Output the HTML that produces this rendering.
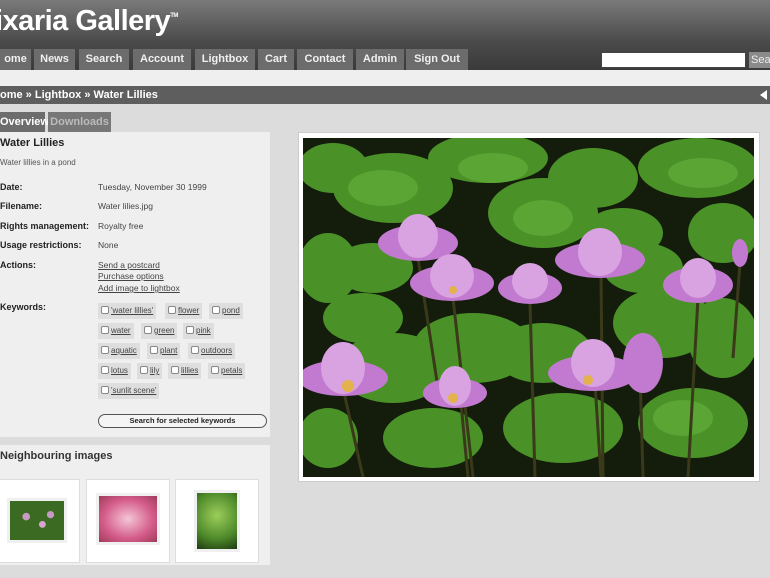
<!DOCTYPE html>
<html><head><meta charset="utf-8"><style>
*{margin:0;padding:0;box-sizing:border-box}
body{width:770px;height:578px;overflow:hidden;background:#dcdcdc;font-family:"Liberation Sans",sans-serif;position:relative}
.hdr{position:absolute;left:0;top:0;width:770px;height:70px;background:linear-gradient(#7a7a7a,#4a4a4a 60%,#3a3a3a)}
.logo{position:absolute;left:-5px;top:5px;font-size:29px;font-weight:bold;color:#fff;letter-spacing:-0.5px}
.logo sup{font-size:6px;vertical-align:top;position:relative;top:8px}
.tab{position:absolute;top:49px;height:21px;background:#6c6c6c;color:#f0f0f0;font-size:11px;font-weight:bold;text-align:center;line-height:21px}
.sep{position:absolute;top:70px;left:0;width:770px;height:16px;background:#efefef}
.bc{position:absolute;top:86px;left:0;width:770px;height:18px;background:#5e5e5e;color:#fff;font-size:11px;font-weight:bold;line-height:18px}
.st{position:absolute;top:112px;height:20px;background:#6c6c6c;font-size:11px;font-weight:bold;line-height:20px;text-align:center}
.panel{position:absolute;background:#efefef}
.l{position:absolute;font-size:9px;color:#222}
.b{font-weight:bold}
.v{position:absolute;left:98px;font-size:8.5px;color:#444}
.u{text-decoration:underline}
.kw{position:absolute;height:16px;background:#dedede;font-size:8px;color:#444;line-height:16px;padding:0 3px;text-decoration:underline}
.kw i{display:inline-block;width:8px;height:8px;border:1px solid #888;border-radius:2px;background:#fff;vertical-align:-1px;margin-right:2px}
.th{position:absolute;top:479px;width:84px;height:84px;background:#fff;border:1px solid #ddd}
</style></head><body>
<div class="hdr"><div class="logo">ixaria Gallery<sup>TM</sup></div></div>
<div class="tab" style="left:0;width:31px">ome</div>
<div class="tab" style="left:34px;width:41px">News</div>
<div class="tab" style="left:79px;width:50px">Search</div>
<div class="tab" style="left:133px;width:58px">Account</div>
<div class="tab" style="left:195px;width:60px">Lightbox</div>
<div class="tab" style="left:258px;width:36px">Cart</div>
<div class="tab" style="left:297px;width:56px">Contact</div>
<div class="tab" style="left:356px;width:48px">Admin</div>
<div class="tab" style="left:406px;width:62px">Sign Out</div>
<div style="position:absolute;left:601px;top:52px;width:145px;height:16px;background:#fff;border:1px solid #444"></div>
<div style="position:absolute;left:749px;top:52px;width:21px;height:16px;background:#8a8a8a;color:#eee;font-size:11px;line-height:16px;padding-left:2px">Sea</div>
<div class="sep"></div>
<div class="bc">ome » Lightbox » Water Lillies<span style="position:absolute;right:3px;top:4px;width:0;height:0;border-top:5px solid transparent;border-bottom:5px solid transparent;border-right:7px solid #fff"></span></div>
<div class="st" style="left:0;width:45px;color:#fff">Overview</div>
<div class="st" style="left:48px;width:63px;color:#bbb;background:#777">Downloads</div>
<div class="panel" style="left:0;top:132px;width:270px;height:305px"></div>
<div class="l b" style="left:0;top:137px;font-size:11px;color:#222">Water Lillies</div>
<div class="l" style="left:0;top:158px;font-size:8px;color:#555">Water lillies in a pond</div>
<div class="l b" style="top:182px;left:0">Date:</div><div class="v" style="top:182px">Tuesday, November 30 1999</div>
<div class="l b" style="top:201px;left:0">Filename:</div><div class="v" style="top:201px">Water lilies.jpg</div>
<div class="l b" style="top:221px;left:0">Rights management:</div><div class="v" style="top:221px">Royalty free</div>
<div class="l b" style="top:240px;left:0">Usage restrictions:</div><div class="v" style="top:240px">None</div>
<div class="l b" style="top:260px;left:0">Actions:</div>
<div class="v u" style="top:260px">Send a postcard</div><div class="v u" style="top:271px">Purchase options</div><div class="v u" style="top:283px">Add image to lightbox</div>
<div class="l b" style="top:302px;left:0">Keywords:</div>
<div class="kw" style="left:98px;top:303px"><i></i>'water lillies'</div>
<div class="kw" style="left:165px;top:303px"><i></i>flower</div>
<div class="kw" style="left:209px;top:303px"><i></i>pond</div>
<div class="kw" style="left:98px;top:323px"><i></i>water</div>
<div class="kw" style="left:141px;top:323px"><i></i>green</div>
<div class="kw" style="left:183px;top:323px"><i></i>pink</div>
<div class="kw" style="left:98px;top:343px"><i></i>aquatic</div>
<div class="kw" style="left:147px;top:343px"><i></i>plant</div>
<div class="kw" style="left:188px;top:343px"><i></i>outdoors</div>
<div class="kw" style="left:98px;top:363px"><i></i>lotus</div>
<div class="kw" style="left:137px;top:363px"><i></i>lily</div>
<div class="kw" style="left:168px;top:363px"><i></i>lillies</div>
<div class="kw" style="left:208px;top:363px"><i></i>petals</div>
<div class="kw" style="left:98px;top:383px"><i></i>'sunlit scene'</div>
<div style="position:absolute;left:98px;top:414px;width:169px;height:14px;border:1px solid #555;border-radius:7px;background:#f4f4f4;font-size:7.5px;font-weight:bold;text-align:center;line-height:12px;color:#222">Search for selected keywords</div>
<div class="panel" style="left:0;top:445px;width:270px;height:120px"></div>
<div class="l b" style="left:0;top:450px;font-size:11px;color:#333">Neighbouring images</div>
<div class="th" style="left:-4px"><div style="position:absolute;left:10px;top:18px;width:60px;height:45px;background:radial-gradient(circle at 30% 40%,#c79ac0 8%,transparent 9%),radial-gradient(circle at 60% 60%,#d6a4cf 8%,transparent 9%),radial-gradient(circle at 75% 35%,#c59ac7 7%,transparent 8%),#3b6a22;border:3px solid #f0f0f0"></div></div>
<div class="th" style="left:86px"><div style="position:absolute;left:9px;top:13px;width:64px;height:52px;background:radial-gradient(ellipse at 50% 50%,#f4c6d6,#d45c8a 60%,#9e3c5a);border:3px solid #f0f0f0"></div></div>
<div class="th" style="left:175px"><div style="position:absolute;left:18px;top:10px;width:46px;height:62px;background:radial-gradient(circle at 50% 40%,#9ccd5a,#4e8a2a 60%,#1d3a12);border:3px solid #f0f0f0"></div></div>
<div style="position:absolute;left:298px;top:132px;width:462px;height:350px;background:#fff;border:1px solid #ccc"></div>
<svg style="position:absolute;left:303px;top:138px" width="451" height="339" viewBox="0 0 451 339">
<rect width="451" height="339" fill="#141c0c"/>
<g fill="#4a9128">
<ellipse cx="30" cy="30" rx="35" ry="25"/><ellipse cx="90" cy="50" rx="60" ry="35"/><ellipse cx="185" cy="20" rx="60" ry="25"/>
<ellipse cx="240" cy="75" rx="55" ry="35"/><ellipse cx="290" cy="40" rx="45" ry="30"/><ellipse cx="395" cy="30" rx="60" ry="30"/>
<ellipse cx="320" cy="95" rx="40" ry="25"/><ellipse cx="420" cy="95" rx="35" ry="30"/><ellipse cx="25" cy="130" rx="30" ry="35"/>
<ellipse cx="70" cy="130" rx="40" ry="25"/><ellipse cx="170" cy="210" rx="60" ry="35"/><ellipse cx="90" cy="230" rx="55" ry="35"/>
<ellipse cx="240" cy="215" rx="50" ry="30"/><ellipse cx="360" cy="185" rx="50" ry="35"/><ellipse cx="420" cy="200" rx="35" ry="40"/>
<ellipse cx="260" cy="290" rx="60" ry="35"/><ellipse cx="390" cy="285" rx="55" ry="35"/><ellipse cx="25" cy="300" rx="30" ry="30"/>
<ellipse cx="130" cy="300" rx="50" ry="30"/><ellipse cx="340" cy="130" rx="40" ry="25"/><ellipse cx="60" cy="180" rx="40" ry="25"/>
</g>
<g fill="#5aa534"><ellipse cx="190" cy="30" rx="35" ry="15"/><ellipse cx="400" cy="35" rx="35" ry="15"/><ellipse cx="80" cy="50" rx="35" ry="18"/><ellipse cx="240" cy="80" rx="30" ry="18"/><ellipse cx="380" cy="280" rx="30" ry="18"/></g>
<g stroke="#3a3a1a" stroke-width="3">
<line x1="150" y1="160" x2="170" y2="339"/><line x1="115" y1="120" x2="135" y2="250"/><line x1="227" y1="165" x2="232" y2="339"/>
<line x1="298" y1="135" x2="300" y2="339"/><line x1="395" y1="160" x2="385" y2="339"/><line x1="40" y1="250" x2="60" y2="339"/>
<line x1="158" y1="265" x2="165" y2="339"/><line x1="292" y1="245" x2="298" y2="339"/><line x1="337" y1="235" x2="340" y2="339"/><line x1="437" y1="125" x2="430" y2="220"/>
</g>
<g fill="#c27ad0">
<ellipse cx="115" cy="105" rx="40" ry="18"/><ellipse cx="115" cy="98" rx="20" ry="22" fill="#d9a2e0"/>
<ellipse cx="149" cy="145" rx="42" ry="18"/><ellipse cx="149" cy="138" rx="22" ry="22" fill="#d9a2e0"/>
<ellipse cx="227" cy="150" rx="32" ry="16"/><ellipse cx="227" cy="143" rx="18" ry="18" fill="#d9a2e0"/>
<ellipse cx="297" cy="122" rx="45" ry="18"/><ellipse cx="297" cy="114" rx="22" ry="24" fill="#d9a2e0"/>
<ellipse cx="395" cy="147" rx="35" ry="18"/><ellipse cx="395" cy="140" rx="18" ry="20" fill="#d9a2e0"/>
<ellipse cx="437" cy="115" rx="8" ry="14"/>
<ellipse cx="40" cy="240" rx="45" ry="18"/><ellipse cx="40" cy="230" rx="22" ry="26" fill="#d9a2e0"/>
<ellipse cx="152" cy="255" rx="32" ry="15"/><ellipse cx="152" cy="248" rx="16" ry="20" fill="#d9a2e0"/>
<ellipse cx="290" cy="235" rx="45" ry="18"/><ellipse cx="290" cy="225" rx="22" ry="24" fill="#d9a2e0"/>
<ellipse cx="340" cy="225" rx="20" ry="30"/>
</g>
<g fill="#e4b24a"><circle cx="45" cy="248" r="6"/><circle cx="150" cy="260" r="5"/><circle cx="285" cy="242" r="5"/><circle cx="150" cy="152" r="4"/></g>
</svg>
</body></html>
